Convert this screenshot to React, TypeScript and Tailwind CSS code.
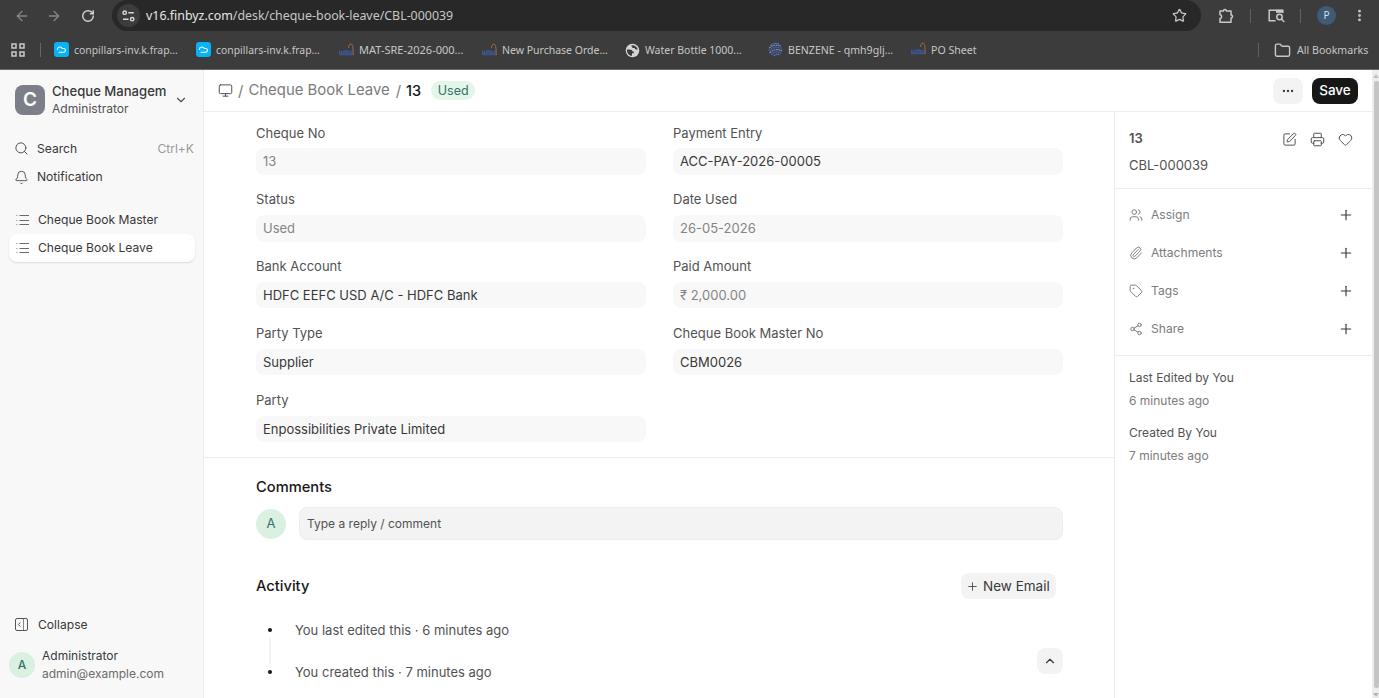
import React from 'react';
import {
  ArrowLeft,
  ArrowRight,
  Bell,
  ChevronDown,
  ChevronUp,
  Ellipsis,
  EllipsisVertical,
  Folder,
  Heart,
  Monitor,
  Paperclip,
  Plus,
  Printer,
  RotateCw,
  Search,
  Share2,
  SquarePen,
  Star,
  Tag,
  Users,
} from 'lucide-react';

type BookmarkIcon = 'cloud' | 'wow' | 'globe' | 'sphere';

interface Bookmark {
  icon: BookmarkIcon;
  label: string;
  width: string;
}

interface Field {
  label: string;
  value: string;
  muted?: boolean;
}

const bookmarks: Bookmark[] = [
  { icon: 'cloud', label: 'conpillars-inv.k.frap...', width: 'w-[142px] text-[10.4px]' },
  { icon: 'cloud', label: 'conpillars-inv.k.frap...', width: 'w-[143px] text-[10.4px]' },
  { icon: 'wow', label: 'MAT-SRE-2026-000...', width: 'w-[143px] text-[11px]' },
  { icon: 'wow', label: 'New Purchase Orde...', width: 'w-[143px] text-[10.5px]' },
  { icon: 'globe', label: 'Water Bottle 1000...', width: 'w-[143px] text-[10.5px]' },
  { icon: 'sphere', label: 'BENZENE - qmh9glj...', width: 'w-[143px] text-[10.6px]' },
  { icon: 'wow', label: 'PO Sheet', width: 'w-[90px] text-[10.6px]' },
];

const leftFields: Field[] = [
  { label: 'Cheque No', value: '13', muted: true },
  { label: 'Status', value: 'Used', muted: true },
  { label: 'Bank Account', value: 'HDFC EEFC USD A/C - HDFC Bank' },
  { label: 'Party Type', value: 'Supplier' },
  { label: 'Party', value: 'Enpossibilities Private Limited' },
];

const rightFields: Field[] = [
  { label: 'Payment Entry', value: 'ACC-PAY-2026-00005' },
  { label: 'Date Used', value: '26-05-2026', muted: true },
  { label: 'Paid Amount', value: '₹ 2,000.00', muted: true },
  { label: 'Cheque Book Master No', value: 'CBM0026' },
];

const docActions = [
  { label: 'Assign', Icon: Users },
  { label: 'Attachments', Icon: Paperclip },
  { label: 'Tags', Icon: Tag },
  { label: 'Share', Icon: Share2 },
];

const Favicon: React.FC<{ icon: BookmarkIcon }> = ({ icon }) => {
  if (icon === 'cloud') {
    return (
      <svg width="15" height="15" viewBox="0 0 15 15" fill="none">
        <rect width="15" height="15" rx="3.2" fill="#06b3f5" />
        <path d="M3.4 7.400a2.500 2.500 0 0 1 4.800-.9h1.300a1.900 1.900 0 0 1 0 3.800H5" stroke="#fff" strokeWidth="1.1" strokeLinecap="round" />
      </svg>
    );
  }
  if (icon === 'globe') {
    return (
      <svg width="15" height="15" viewBox="0 0 15 15">
        <circle cx="7.5" cy="7.5" r="6.8" fill="#d5d5d5" />
        <path d="M2 6.5h2.500c1.800 0 3 .8 3 2h1.300v1.700H7v2.600C4 12.800 1.700 10.200 2 6.500z" fill="#3c3c3c" />
        <path d="M6.500 2.200c3-.4 5.600 1.300 6.300 4.300H11c-.9 0-1.200-.7-1.300-1.400H7.300V3.700c-.7 0-1-.7-.8-1.500z" fill="#3c3c3c" />
      </svg>
    );
  }
  if (icon === 'sphere') {
    return (
      <svg width="15" height="15" viewBox="0 0 15 15" fill="none">
        <circle cx="7.5" cy="7.5" r="7" fill="#3c4354" />
        <g strokeWidth="1.1" strokeDasharray="1.7 .7">
          <path d="M2.5 3.5Q6 .2 11 1.7" stroke="#5878b8" />
          <path d="M1.2 6Q6.5 1.5 13 4" stroke="#8796b5" />
          <path d="M.8 8.5Q6.5 3.5 14 6.3" stroke="#4669b5" />
          <path d="M1.6 10.8Q7.5 5.5 14 8.8" stroke="#8796b5" />
          <path d="M3.2 12.8Q8 8 13.2 11" stroke="#4669b5" />
          <path d="M6 14Q9 11 11.5 12.7" stroke="#5878b8" />
        </g>
      </svg>
    );
  }
  return (
    <svg width="15" height="15" viewBox="0 0 15 15" fill="none">
      <path d="M.6 7.500v4h3.600v-4M2.400 8v3.500M5.800 8v3.500h2V8zM9.300 7.500v4h3.600v-4M11.100 8v3.500" stroke="#3a5590" strokeWidth="1.300" />
      <path d="M9.500 5C9.900 2.300 10.500 1 12 1c1.600 0 2.200 3.500 2.200 11.200" stroke="#a4694d" strokeWidth="1" />
    </svg>
  );
};

const ListIcon = () => (
  <svg width="14" height="14" viewBox="0 0 14 14" stroke="#6b6b6b" strokeWidth="1">
    <path d="M3.5 2.5h9.5M3.5 7.5h9.5M3.5 11.5h9.5" />
    <path d="M.3 2.5h1.2M.3 7.5h1.2M.3 11.5h1.2" stroke="#999" />
  </svg>
);

const BrowserBar = () => (
  <div className="h-[70px] shrink-0 border-b border-[#6a6a6a] bg-[#3c3c3c] font-['Noto_Sans',sans-serif] text-[#c7c7c7]">
    <div className="flex h-[31px] items-center">
      <div className="flex w-[112px] items-center pl-[14px]">
        <ArrowLeft size={16} strokeWidth={2} className="text-[#858585]" />
        <ArrowRight size={16} strokeWidth={2} className="ml-[16px] text-[#858585]" />
        <RotateCw size={14} strokeWidth={2.5} className="ml-[19px] text-[#d0d0d0]" />
      </div>
      <div className="flex h-[31px] w-[1089px] items-center rounded-full bg-[#282828] pl-[5px]">
        <div className="flex size-[23px] items-center justify-center rounded-full bg-[#3c3c3c]">
          <svg width="13" height="12" viewBox="0 0 13 12" fill="none" stroke="#dadada" strokeWidth="1.4">
            <circle cx="2.7" cy="2.7" r="1.7" />
            <path d="M6.3 2.7h5.5M1 9.2h5.5" />
            <circle cx="10.2" cy="9.2" r="1.7" />
          </svg>
        </div>
        <span className="ml-[6px] pt-px text-[12.4px] whitespace-nowrap">
          <span className="text-[#e6e6e6]">v16.finbyz.com</span>/desk/cheque-book-leave/CBL-000039
        </span>
        <Star size={15} strokeWidth={2} className="mr-[14px] ml-auto" />
      </div>
      <svg className="ml-[17px]" width="17" height="16" viewBox="0 0 17 16" fill="none" stroke="#c9c9c9" strokeWidth="1.5">
        <path d="M2 3h3.5a1.4 1.4 0 0 1 2.8 0H13v4a1.5 1.5 0 0 1 0 3v4.2H2v-3.7c2.200-.2 2.200-3.600 0-3.800z" strokeLinejoin="round" />
      </svg>
      <div className="ml-[15px] h-[14px] w-px bg-[#665d60]" />
      <svg className="ml-[17px]" width="17" height="15" viewBox="0 0 17 15" fill="none" stroke="#c9c9c9" strokeWidth="1.5">
        <path d="M7.5 12.8H1.2V2.2h13.6V5" />
        <path d="M8 3.3h7" strokeWidth="3" />
        <circle cx="11.5" cy="9" r="2.7" />
        <path d="m13.5 11 2.7 3" />
      </svg>
      <div className="ml-[15px] h-[14px] w-px bg-[#626262]" />
      <div className="ml-[16px] flex size-[19px] items-center justify-center rounded-full bg-[#415a78] text-[10px] text-[#d5deea]">P</div>
      <EllipsisVertical size={15} strokeWidth={2.5} className="ml-[16px]" />
    </div>
    <div className="flex h-[38px] items-center text-[10.6px]">
      <svg className="ml-[11px]" width="14" height="14" viewBox="0 0 14 14" fill="none" stroke="#c9c9c9" strokeWidth="1.5">
        <path d="M1 1h4v4H1zM9 1h4v4H9zM1 9h4v4H1zM9 9h4v4H9z" />
      </svg>
      <div className="mr-[13px] ml-[15px] h-[14px] w-px bg-[#666]" />
      {bookmarks.map((bookmark, i) => (
        <div key={i} className={`flex shrink-0 items-center gap-[5px] whitespace-nowrap ${bookmark.width}`}>
          <Favicon icon={bookmark.icon} />
          <span className="pt-px">{bookmark.label}</span>
        </div>
      ))}
      <div className="ml-auto h-[14px] w-px bg-[#665d60]" />
      <Folder size={17} strokeWidth={2} className="ml-[15px]" />
      <span className="mr-[11px] ml-[6px] w-[71px] pt-px whitespace-nowrap">All Bookmarks</span>
    </div>
  </div>
);

const Sidebar = () => (
  <aside className="flex w-[204px] shrink-0 flex-col border-r border-[#ededed] bg-[#f8f8f8] text-[12.1px] text-[#383838]">
    <div className="mt-[10px] flex h-[40px] items-center pl-[15px]">
      <div className="flex size-[30px] items-center justify-center rounded-[8px] bg-[#7c7f88] text-[19px] font-semibold text-white">C</div>
      <div className="ml-[7px] w-[116px]">
        <div className="text-[13.1px] leading-[18px] font-medium whitespace-nowrap">Cheque Managem</div>
        <div className="text-[12.1px] leading-[18px] text-[#525252]">Administrator</div>
      </div>
      <ChevronDown size={14} strokeWidth={2} className="ml-[6px] text-[#525252]" />
    </div>
    <div className="mt-[14px] flex h-[29px] items-center pl-[14px]">
      <Search size={15} strokeWidth={1.6} className="text-[#525252]" />
      <span className="ml-[8px] pt-px">Search</span>
      <span className="mr-[9px] ml-auto pt-px text-[#999]">Ctrl+K</span>
    </div>
    <div className="flex h-[29px] items-center pl-[14px]">
      <Bell size={15} strokeWidth={1.5} className="text-[#525252]" />
      <span className="ml-[8px]">Notification</span>
    </div>
    <div className="mt-[13px] flex h-[29px] items-center pl-[16px]">
      <ListIcon />
      <span className="ml-[8px] pt-px">Cheque Book Master</span>
    </div>
    <div className="mr-[8px] ml-[9px] flex h-[28px] items-center rounded-[8px] bg-white pl-[7px] shadow-[0_1px_2px_rgba(0,0,0,0.12)]">
      <ListIcon />
      <span className="ml-[8px] pt-px">Cheque Book Leave</span>
    </div>
    <div className="mt-auto flex h-[27px] items-center pl-[15px]">
      <svg width="13" height="13" viewBox="0 0 13 13" fill="none" stroke="#555">
        <rect x=".5" y=".5" width="12" height="12" rx="1.5" />
        <path d="M8.5.5v12" strokeWidth=".7" />
        <path d="M5.3 4.5l-2 2 2 2" />
      </svg>
      <span className="ml-[10px] pt-px">Collapse</span>
    </div>
    <div className="mt-[8px] mb-[14px] flex h-[38px] items-center pl-[9px]">
      <div className="flex size-[26px] items-center justify-center rounded-full bg-[#daf0e1] text-[12px] font-medium text-[#38706a]">A</div>
      <div className="ml-[7px] text-[12px] leading-[18px]">
        <div>Administrator</div>
        <div className="text-[#6b6b6b]">admin@example.com</div>
      </div>
    </div>
  </aside>
);

const FieldColumn: React.FC<{ fields: Field[] }> = ({ fields }) => (
  <div className="w-[390px]">
    {fields.map((field) => (
      <div key={field.label} className="h-[66.8px]">
        <div className="h-[16px] leading-[17px] text-[#525252]">{field.label}</div>
        <div
          className={`mt-[7.8px] flex h-[26.5px] items-center rounded-[8px] bg-[#f8f8f8] px-[7px] pt-px ${
            field.muted ? 'text-[#858585]' : 'text-[#383838]'
          }`}
        >
          {field.value}
        </div>
      </div>
    ))}
  </div>
);

const FormBody = () => (
  <main className="w-[910px] shrink-0 overflow-hidden text-[13px]">
    <section className="flex h-[346px] gap-[27px] border-b border-[#ededed] pt-[12.6px] pl-[52px]">
      <FieldColumn fields={leftFields} />
      <FieldColumn fields={rightFields} />
    </section>
    <section className="pr-[51px] pl-[52px]">
      <h3 className="mt-[19px] h-[20px] text-[14.7px] leading-[20px] font-medium text-[#171717]">Comments</h3>
      <div className="mt-[10px] flex h-[33px] items-center gap-[13px]">
        <div className="flex size-[30px] items-center justify-center rounded-full bg-[#daf0e1] text-[#38706a]">A</div>
        <div className="flex h-[33px] flex-1 items-center rounded-[8px] border border-[#ededed] bg-[#f3f3f3] px-[7px] text-[12px] text-[#525252]">
          Type a reply / comment
        </div>
      </div>
      <div className="mt-[33px] flex h-[26px] items-center justify-between pr-[7px]">
        <h3 className="text-[14.7px] font-medium text-[#171717]">Activity</h3>
        <button className="flex h-[26px] w-[95px] items-center rounded-[8px] bg-[#f3f3f3] pl-[5px] text-[13.5px] whitespace-nowrap text-[#383838]">
          <Plus size={13} strokeWidth={1.5} />
          <span className="ml-[4px]">New Email</span>
        </button>
      </div>
      <div className="flex pt-[21px] text-[#525252]">
        <div className="flex w-[28px] flex-col items-center pt-[8px]">
          <div className="size-[4px] rounded-full bg-[#171717]" />
          <div className="my-[6px] h-[26px] w-[2px] bg-[#f3f3f3]" />
          <div className="size-[4px] rounded-full bg-[#171717]" />
        </div>
        <div className="ml-[11px]">
          <div className="h-[42px] leading-[20px]">You last edited this · 6 minutes ago</div>
          <div className="leading-[20px]">You created this · 7 minutes ago</div>
        </div>
        <button className="mt-[28px] ml-auto flex size-[26px] items-center justify-center rounded-[8px] bg-[#f3f3f3] text-[#383838]">
          <ChevronUp size={14} strokeWidth={2} />
        </button>
      </div>
    </section>
  </main>
);

const DocSidebar = () => (
  <aside className="flex-1 border-l border-[#ededed] text-[13px] text-[#525252]">
    <div className="h-[77px] border-b border-[#ededed] pt-[17px] pr-[19px] pl-[14px]">
      <div className="flex h-[20px] items-center">
        <span className="font-semibold">13</span>
        <SquarePen size={15} strokeWidth={1.6} className="ml-auto" />
        <Printer size={15} strokeWidth={1.6} className="ml-[13px]" />
        <Heart size={15} strokeWidth={1.6} className="ml-[13px]" />
      </div>
      <div className="mt-[6px] leading-[20px]">CBL-000039</div>
    </div>
    <div className="h-[167px] border-b border-[#ededed] pt-[7px] pr-[18px] pl-[14px] text-[12.1px] text-[#7c7c7c]">
      {docActions.map(({ label, Icon }) => (
        <div key={label} className="flex h-[38px] items-center">
          <Icon size={14} strokeWidth={1.7} />
          <span className="ml-[8px] pt-px">{label}</span>
          <Plus size={16} strokeWidth={1.7} className="ml-auto text-[#383838]" />
        </div>
      ))}
    </div>
    <div className="pt-[12px] pl-[14px] text-[12px] leading-[20px]">
      <div>Last Edited by You</div>
      <div className="mt-[3px] text-[#7c7c7c]">6 minutes ago</div>
      <div className="mt-[12px]">Created By You</div>
      <div className="mt-[3px] text-[#7c7c7c]">7 minutes ago</div>
    </div>
  </aside>
);

const Scrollbar = () => (
  <div className="flex w-[7px] shrink-0 flex-col items-end bg-[#ededed] pt-[3px]">
    <svg width="6" height="5" viewBox="0 0 6 5" fill="#c1c1c1">
      <path d="M0 5l3-4 3 4z" />
    </svg>
    <div className="mt-[3px] w-[5px] flex-1 rounded-[2px] bg-[#c4c4c4]" />
    <svg className="mt-[5px]" width="6" height="5" viewBox="0 0 6 5" fill="#b5b5b5">
      <path d="M0 0h6L3 4z" />
    </svg>
  </div>
);

const App = () => (
  <div className="flex h-[698px] w-[1379px] flex-col overflow-hidden bg-white font-['Inter',sans-serif]">
    <BrowserBar />
    <div className="flex min-h-0 flex-1">
      <Sidebar />
      <div className="flex min-w-0 flex-1 flex-col">
        <header className="flex h-[42px] shrink-0 items-center border-b border-[#ededed] px-[14px] pb-px text-[15px] leading-[19px] text-[#7c7c7c]">
          <Monitor size={15} strokeWidth={1.6} className="text-[#525252]" />
          <span className="ml-[5px]">/</span>
          <span className="ml-[5px] text-[14.9px]">Cheque Book Leave</span>
          <span className="ml-[6px]">/</span>
          <span className="ml-[5px] text-[14.5px] font-medium text-[#171717]">13</span>
          <span className="ml-[10px] flex h-[19px] w-[44px] items-center justify-center rounded-full bg-[#e4f5e9] text-[12.5px] text-[#38706a]">
            Used
          </span>
          <button className="mt-px ml-auto flex h-[26px] w-[30px] items-center justify-center rounded-[8px] bg-[#f3f3f3] text-[#383838]">
            <Ellipsis size={14} strokeWidth={2} />
          </button>
          <button className="mt-px ml-[9px] h-[26px] w-[46px] rounded-[8px] bg-[#171717] text-[13.5px] font-medium text-white">Save</button>
        </header>
        <div className="flex min-h-0 flex-1">
          <FormBody />
          <DocSidebar />
        </div>
      </div>
      <Scrollbar />
    </div>
  </div>
);

export default App;
